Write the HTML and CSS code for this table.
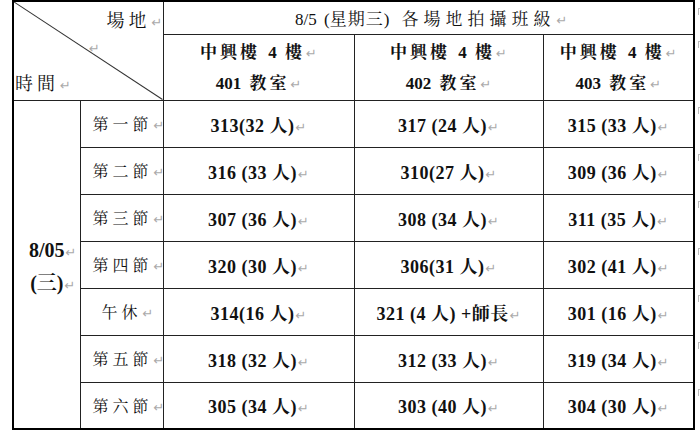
FILE: index.html
```html
<!DOCTYPE html>
<html>
<head>
<meta charset="utf-8">
<link rel="stylesheet" href="styles.css">
</head>
<body>
<div class="page">
<table class="sched">
  <colgroup>
    <col class="c-date"><col class="c-per"><col class="c-a"><col class="c-b"><col class="c-c">
  </colgroup>
  <tr class="r-h1">
    <td class="corner" colspan="2" rowspan="2">
      <svg class="diag" viewBox="0 0 100 100" preserveAspectRatio="none"><line x1="0" y1="0" x2="100" y2="100" stroke="#333" stroke-width="1" vector-effect="non-scaling-stroke"/></svg>
      <div class="corner-in">
        <span class="c-top">場地<i class="rt">↵</i></span>
        <span class="c-mid"><i class="rt">↵</i></span>
        <span class="c-bot">時間<i class="rt">↵</i></span>
      </div>
    </td>
    <td class="title" colspan="3">8/5 (<span class="t1">星期三</span>) <span class="t2">各場地拍攝班級</span><i class="rt">↵</i></td>
  </tr>
  <tr class="r-h2">
    <td class="room"><span class="cj">中興樓</span> 4 <span class="cj">樓</span><i class="rt">↵</i><br>401 <span class="cj">教室</span><i class="rt">↵</i></td>
    <td class="room"><span class="cj">中興樓</span> 4 <span class="cj">樓</span><i class="rt">↵</i><br>402 <span class="cj">教室</span><i class="rt">↵</i></td>
    <td class="room"><span class="cj">中興樓</span> 4 <span class="cj">樓</span><i class="rt">↵</i><br>403 <span class="cj">教室</span><i class="rt">↵</i></td>
  </tr>
  <tr class="r-d">
    <td class="date" rowspan="7">8/05<i class="rt">↵</i><br>(三)<i class="rt">↵</i></td>
    <td class="per">第一節<i class="rt">↵</i></td>
    <td class="cls">313(32 人)<i class="rt">↵</i></td>
    <td class="cls">317 (24 人)<i class="rt">↵</i></td>
    <td class="cls">315 (33 人)<i class="rt">↵</i></td>
  </tr>
  <tr class="r-d">
    <td class="per">第二節<i class="rt">↵</i></td>
    <td class="cls">316 (33 人)<i class="rt">↵</i></td>
    <td class="cls">310(27 人)<i class="rt">↵</i></td>
    <td class="cls">309 (36 人)<i class="rt">↵</i></td>
  </tr>
  <tr class="r-d">
    <td class="per">第三節<i class="rt">↵</i></td>
    <td class="cls">307 (36 人)<i class="rt">↵</i></td>
    <td class="cls">308 (34 人)<i class="rt">↵</i></td>
    <td class="cls">311 (35 人)<i class="rt">↵</i></td>
  </tr>
  <tr class="r-d">
    <td class="per">第四節<i class="rt">↵</i></td>
    <td class="cls">320 (30 人)<i class="rt">↵</i></td>
    <td class="cls">306(31 人)<i class="rt">↵</i></td>
    <td class="cls">302 (41 人)<i class="rt">↵</i></td>
  </tr>
  <tr class="r-d">
    <td class="per noon">午休<i class="rt">↵</i></td>
    <td class="cls">314(16 人)<i class="rt">↵</i></td>
    <td class="cls">321 (4 人) +師長<i class="rt">↵</i></td>
    <td class="cls">301 (16 人)<i class="rt">↵</i></td>
  </tr>
  <tr class="r-d">
    <td class="per">第五節<i class="rt">↵</i></td>
    <td class="cls">318 (32 人)<i class="rt">↵</i></td>
    <td class="cls">312 (33 人)<i class="rt">↵</i></td>
    <td class="cls">319 (34 人)<i class="rt">↵</i></td>
  </tr>
  <tr class="r-d">
    <td class="per">第六節<i class="rt">↵</i></td>
    <td class="cls">305 (34 人)<i class="rt">↵</i></td>
    <td class="cls">303 (40 人)<i class="rt">↵</i></td>
    <td class="cls">304 (30 人)<i class="rt">↵</i></td>
  </tr>
</table>
<div class="marks">
  <span class="m m-h1"><b></b></span>
  <span class="m m-h2"><b></b></span>
  <span class="m m-d"><b></b></span>
  <span class="m m-d"><b></b></span>
  <span class="m m-d"><b></b></span>
  <span class="m m-d"><b></b></span>
  <span class="m m-d"><b></b></span>
  <span class="m m-d"><b></b></span>
  <span class="m m-d"><b></b></span>
</div>
</div>
</body>
</html>
```

FILE: styles.css
```css
html, body {
  margin: 0;
  padding: 0;
  background: #fff;
}
body {
  font-family: "Liberation Serif", "Noto Serif CJK TC", "AR PL UMing TW", "Noto Sans CJK TC", serif;
  color: #111;
}
.page {
  display: flex;
  align-items: flex-start;
  padding-left: 12px;
  overflow: hidden;
  width: 688px;
}
.sched {
  border-collapse: collapse;
  table-layout: fixed;
  width: 682px;
  border: 2px solid #000;
  flex: none;
}
.c-date { width: 67px; }
.c-per { width: 83px; }
.c-a { width: 191px; }
.c-b { width: 189px; }
.c-c { width: 151px; }
.sched td {
  border: 1px solid #222;
  padding: 0;
  text-align: center;
  vertical-align: middle;
}
.r-h1 { height: 33px; }
.r-h2 { height: 66px; }
.r-d { height: 47px; }
.rt {
  font-style: normal;
  font-weight: normal;
  font-family: "DejaVu Sans", sans-serif;
  font-size: 13px;
  letter-spacing: 0;
  word-spacing: 0;
  color: #aaa;
  margin-left: 1px;
}
.corner {
  position: relative;
  padding: 0;
}
.diag {
  position: absolute;
  left: 0;
  top: 0;
  width: 100%;
  height: 100%;
}
.corner-in {
  position: relative;
  height: 97px;
  display: flex;
  flex-direction: column;
  justify-content: space-between;
  font-size: 18px;
  letter-spacing: 4px;
}
.c-top {
  align-self: flex-end;
  padding: 4px 0 0 0;
}
.c-mid {
  align-self: flex-start;
  padding-left: 74px;
  margin-top: -6px;
}
.c-bot {
  align-self: flex-start;
  padding: 0 0 4px 1px;
}
.title {
  font-size: 17px;
  white-space: nowrap;
  word-spacing: 3px;
  padding-left: 6px !important;
}
.t1 {
  letter-spacing: 1px;
}
.t2 {
  letter-spacing: 5px;
  margin-left: 5px;
}
.room {
  font-size: 17px;
  font-weight: bold;
  line-height: 30px;
  word-spacing: 4px;
  padding-top: 3px !important;
}
.cj {
  letter-spacing: 3px;
}
.date {
  font-size: 20px;
  font-weight: bold;
  line-height: 30px;
  padding: 8px 0 0 12px !important;
}
.per {
  font-size: 16px;
  letter-spacing: 4px;
  padding-left: 12px !important;
  white-space: nowrap;
}
.cls {
  font-size: 18px;
  font-weight: bold;
  letter-spacing: 0.5px;
  white-space: nowrap;
}
.marks {
  display: flex;
  flex-direction: column;
  padding-left: 3px;
  flex: none;
  width: 3px;
}
.m {
  display: block;
  padding-top: 8px;
  box-sizing: border-box;
}
.m b {
  display: block;
  width: 3px;
  height: 7px;
  border-left: 1px solid #bbb;
  border-top: 1px solid #bbb;
  box-sizing: border-box;
}
.m-h1 { height: 33px; }
.m-h2 { height: 66px; }
.m-d { height: 47px; }
```
